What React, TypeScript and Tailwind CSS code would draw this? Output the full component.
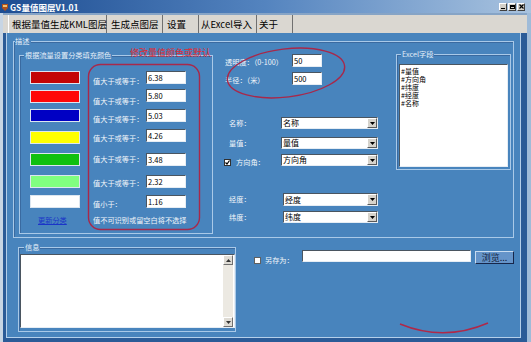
import React from "react";

const cjk = "font-['Noto_Sans_CJK_SC','Noto_Sans',sans-serif]";

function Sunken({ className, children }: { className: string; children?: React.ReactNode }) {
  return (
    <div
      className={`bg-white border border-t-[#4a5560] border-l-[#4a5560] border-r-[#e6edf4] border-b-[#e6edf4] ${className}`}
    >
      {children}
    </div>
  );
}

function Field({ value, className }: { value: string; className: string }) {
  return (
    <Sunken className={`flex items-center pl-[1px] text-[7.5px] leading-[10px] text-black ${className}`}>
      {value}
    </Sunken>
  );
}

function Select({ value, className }: { value: string; className: string }) {
  return (
    <Sunken className={`flex items-stretch ${className}`}>
      <span className="flex-1 pl-[1px] text-[8px] leading-[10px] text-black flex items-center">{value}</span>
      <span className="w-[10px] bg-[#d6d3cc] border-l border-t border-[#ffffff] border-r border-b border-r-[#5a5a5a] border-b-[#5a5a5a] flex items-center justify-center">
        <svg width="5" height="3" viewBox="0 0 5 3">
          <path d="M0 0h5L2.5 3z" fill="#000" />
        </svg>
      </span>
    </Sunken>
  );
}

function Group({
  title,
  className,
  titleClass,
  children,
}: {
  title: string;
  className: string;
  titleClass: string;
  children?: React.ReactNode;
}) {
  return (
    <div className={`relative border border-[#a9c9e8] shadow-[inset_1px_1px_0_#3a6aa0] ${className}`}>
      <span
        className={`absolute -top-[6px] bg-[#4884bd] text-[7.2px] leading-[10px] text-[#e4eef8] whitespace-nowrap ${titleClass}`}
      >
        {title}
      </span>
      {children}
    </div>
  );
}

const rows = [
  { sw: "bg-[#c40404]", v: "6.38", mt: "mt-[15px]", smt: "mt-0", lmt: "mt-[5px]", label: "值大于或等于：" },
  { sw: "bg-[#ff0808]", v: "5.80", mt: "mt-[5px]", smt: "mt-[1px]", lmt: "mt-[7px]", label: "值大于或等于：" },
  { sw: "bg-[#0000c4]", v: "5.03", mt: "mt-[7px]", smt: "mt-0", lmt: "mt-[5px]", label: "值大于或等于：" },
  { sw: "bg-[#ffff00]", v: "4.26", mt: "mt-[7px]", smt: "mt-[2px]", lmt: "mt-[4px]", label: "值大于或等于：" },
  { sw: "bg-[#10c010]", v: "3.48", mt: "mt-[11px]", smt: "mt-0", lmt: "mt-[1px]", label: "值大于或等于：" },
  { sw: "bg-[#80ff80]", v: "2.32", mt: "mt-[9px]", smt: "mt-0", lmt: "mt-[3px]", label: "值大于或等于：" },
  { sw: "bg-white", v: "1.16", mt: "mt-[7px]", smt: "mt-0", lmt: "mt-[4px]", label: "值小于：" },
];

function CtrlBtn({ children }: { children: React.ReactNode }) {
  return (
    <div className="w-[8px] h-[8px] bg-[#d4d0c8] border border-t-white border-l-white border-r-[#404040] border-b-[#404040] flex items-center justify-center">
      {children}
    </div>
  );
}

function ScrollBtn({ up }: { up: boolean }) {
  return (
    <div className="w-[10px] h-[10px] bg-[#dedbd4] border border-t-white border-l-white border-r-[#707070] border-b-[#707070] flex items-center justify-center">
      <svg width="5" height="3" viewBox="0 0 5 3">
        <path d={up ? "M0 3h5L2.5 0z" : "M0 0h5L2.5 3z"} fill="#333" />
      </svg>
    </div>
  );
}

export default function App() {
  return (
    <div className={`relative w-[531px] h-[342px] overflow-hidden bg-[#2b5b97] flex flex-col ${cjk}`}>
      {/* title bar */}
      <div className="h-[13px] flex items-center bg-linear-to-r from-[#1d4d92] via-[#5484bf] to-[#a9c3df]">
        <svg className="ml-[2px]" width="7" height="8" viewBox="0 0 7 8">
          <path d="M0 1h6v4l-3 3-3-3z" fill="#b0501c" />
          <path d="M1 2h4v2H1z" fill="#f0c070" />
        </svg>
        <span className="ml-[1px] text-[8.5px] leading-[10px] font-bold text-white whitespace-nowrap">GS量值图层V1.01</span>
        <div className="ml-auto mr-[6px] flex gap-[1px]">
          <CtrlBtn>
            <div className="w-[4px] h-[1px] bg-black mt-[3px]" />
          </CtrlBtn>
          <CtrlBtn>
            <div className="w-[5px] h-[4px] border border-black border-t-2" />
          </CtrlBtn>
          <CtrlBtn>
            <svg width="5" height="5" viewBox="0 0 5 5">
              <path d="M0.5 0.5l4 4M4.5 0.5l-4 4" stroke="#000" strokeWidth="1.2" />
            </svg>
          </CtrlBtn>
        </div>
      </div>

      <div className="flex-1 flex flex-col border-l-[3px] border-l-[#c7d5e4] border-r-[4px] border-r-[#9fbbd8]">
        <div className="h-[2px] bg-[#86a4c6]" />
        {/* tabs */}
        <div className="h-[18px] bg-[#dad7d1] flex items-stretch text-[9.5px] leading-[12px] text-black whitespace-nowrap">
          <div className="w-[5px]" />
          <div className="w-[99px] pl-[3px] flex items-center border-l border-l-white border-r border-r-[#707070]">
            根据量值生成KML图层
          </div>
          <div className="w-[56px] pl-[4px] flex items-center border-r border-r-[#707070]">生成点图层</div>
          <div className="w-[36px] pl-[4px] flex items-center border-r border-r-[#707070]">设置</div>
          <div className="w-[58px] pl-[2px] flex items-center border-r border-r-[#707070]">从Excel导入</div>
          <div className="w-[36px] pl-[2px] flex items-center border-r border-r-[#707070]">关于</div>
        </div>

        {/* panel */}
        <div className="flex-1 ml-[3px] mr-[6px] mb-[4px] bg-[#4884bd] border-l border-r border-b border-[#b4cfea] pt-[8px] px-[6px] flex flex-col text-[7.2px] leading-[10px] text-[#f2f6fa]">
          <Group title="描述" className="h-[197px] shrink-0 flex items-start" titleClass="left-[1px] pr-[2px]">
            {/* colors sub group */}
            <Group
              title="根据流量设置分类填充颜色"
              className="ml-[5px] mt-[13px] w-[194px] h-[179px] flex flex-col"
              titleClass="left-[4px] px-[1px]"
            >
              {rows.map((r, i) => (
                <div key={i} className={`flex items-start h-[13px] ${r.mt}`}>
                  <div className={`ml-[10px] w-[50px] h-[13px] border border-[#dce6f0] ${r.sw} ${r.smt}`} />
                  <span className={`ml-[13px] w-[53px] whitespace-nowrap ${r.lmt}`}>{r.label}</span>
                  <Field value={r.v} className="w-[40px] h-[13px]" />
                </div>
              ))}
              <div className="flex mt-[7px] whitespace-nowrap">
                <span className="ml-[18px] w-[55px] text-[#1a34c8] underline">更新分类</span>
                <span>值不可识别或留空白将不选择</span>
              </div>
            </Group>

            {/* middle column */}
            <div className="ml-[11px] mt-[12px] w-[172px] flex flex-col whitespace-nowrap">
              <div className="flex items-start h-[13px]">
                <span className="ml-[1px] w-[67px] mt-[3px]">透明度：（0-100）</span>
                <Field value="50" className="w-[30px] h-[13px]" />
              </div>
              <div className="flex items-start h-[13px] mt-[5px]">
                <span className="ml-[1px] w-[67px] mt-[3px]">半径：（米）</span>
                <Field value="500" className="w-[30px] h-[13px]" />
              </div>
              <div className="flex items-start h-[12px] mt-[32px]">
                <span className="ml-[5px] w-[52px] mt-[1px]">名称：</span>
                <Select value="名称" className="w-[97px] h-[12px]" />
              </div>
              <div className="flex items-start h-[12px] mt-[8px]">
                <span className="ml-[5px] w-[52px] mt-[1px]">量值：</span>
                <Select value="量值" className="w-[97px] h-[12px]" />
              </div>
              <div className="flex items-start h-[12px] mt-[5px]">
                <div className="mt-[5px] w-[7px] h-[7px] bg-white border border-[#303030] flex items-center justify-center">
                  <svg width="5" height="5" viewBox="0 0 5 5">
                    <path d="M0.5 2.5l1.5 1.5 2.5-3.5" stroke="#000" strokeWidth="1.2" fill="none" />
                  </svg>
                </div>
                <span className="ml-[5px] w-[45px] mt-[3px]">方向角：</span>
                <Select value="方向角" className="w-[97px] h-[12px]" />
              </div>
              <div className="flex items-start h-[13px] mt-[27px]">
                <span className="ml-[5px] w-[54px] mt-[1px]">经度：</span>
                <Select value="经度" className="w-[95px] h-[13px]" />
              </div>
              <div className="flex items-start h-[12px] mt-[5px]">
                <span className="ml-[5px] w-[54px] mt-[1px]">纬度：</span>
                <Select value="纬度" className="w-[95px] h-[12px]" />
              </div>
            </div>

            {/* excel group */}
            <Group title="Excel字段" className="mt-[12px] w-[115px] h-[116px]" titleClass="left-[4px] px-[1px]">
              <Sunken className="ml-[2px] mt-[9px] w-[109px] h-[103px] pt-[2px] pl-[1px] text-[7px] leading-[8px] text-black">
                <div className="h-[8px] leading-[8px]">#量值</div>
                <div className="h-[8px] leading-[8px]">#方向角</div>
                <div className="h-[8px] leading-[8px]">#纬度</div>
                <div className="h-[8px] leading-[8px]">#经度</div>
                <div className="h-[8px] leading-[8px]">#名称</div>
              </Sunken>
            </Group>
          </Group>

          {/* bottom row */}
          <div className="mt-[9px] flex items-start whitespace-nowrap">
            <Group title="信息" className="ml-[5px] w-[218px] h-[85px] shrink-0" titleClass="left-[5px] pl-[1px] pr-[1px]">
              <Sunken className="ml-[1px] mt-[6px] w-[215px] h-[74px] flex justify-end">
                <div className="mr-[1px] w-[10px] h-full bg-[#ece9e2] flex flex-col justify-between">
                  <ScrollBtn up={true} />
                  <ScrollBtn up={false} />
                </div>
              </Sunken>
            </Group>
            <div className="ml-[18px] mt-[10px] w-[7px] h-[7px] bg-white border border-[#606060]" />
            <span className="ml-[4px] mt-[8px] w-[37px]">另存为：</span>
            <Sunken className="mt-[3px] w-[170px] h-[12px]" />
            <div className="ml-[4px] mt-[4px] w-[39px] h-[13px] bg-[#6594c9] border border-t-[#c8dcf0] border-l-[#c8dcf0] border-r-[#16264a] border-b-[#16264a] flex items-center justify-center text-[9px] leading-[10px] text-[#101c3c]">
              浏览...
            </div>
          </div>
        </div>
      </div>

      {/* red hand-drawn annotations */}
      <svg className="absolute left-0 top-0 pointer-events-none" width="531" height="342" viewBox="0 0 531 342">
        <rect x="88.5" y="64.5" width="111" height="165" rx="12" fill="none" stroke="#a8284a" strokeWidth="1.4" />
        <ellipse cx="286" cy="73" rx="59" ry="24" transform="rotate(-7 286 73)" fill="none" stroke="#a8284a" strokeWidth="1.4" />
        <path d="M400 324 Q444 342 488 323" fill="none" stroke="#b02848" strokeWidth="1.4" />
      </svg>
      <span className="absolute left-[130px] top-[48px] text-[9px] leading-[10px] text-[#e02830] whitespace-nowrap">
        修改量值颜色或默认
      </span>
    </div>
  );
}
